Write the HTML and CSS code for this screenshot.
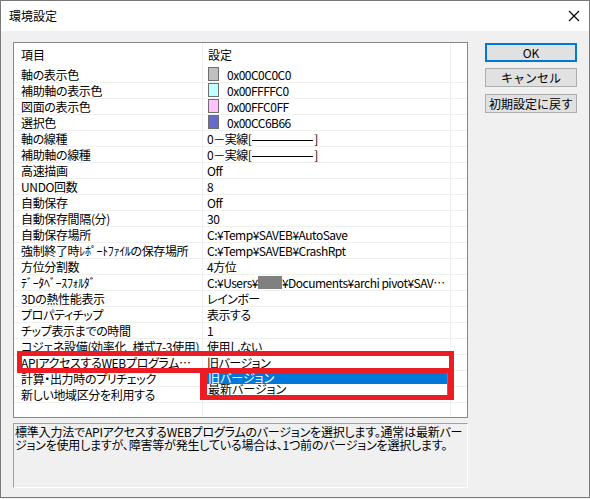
FILE: index.html
```html
<!DOCTYPE html>
<html lang="ja">
<head>
<meta charset="utf-8">
<title>環境設定</title>
<link rel="stylesheet" href="styles.css">
</head>
<body>
<div class="window">
  <div class="titlebar">
    <span class="title">環境設定</span>
    <svg class="close" width="12" height="12" viewBox="0 0 12 12"><path d="M1 1 L11 11 M11 1 L1 11" stroke="#000" stroke-width="1.1" fill="none"/></svg>
  </div>
  <div class="content">
    <div class="left">
      <div class="list">
        <div class="row head"><div class="c1">項目</div><div class="c2">設定</div><div class="c3"></div></div>
        <div class="row"><div class="c1">軸の表示色</div><div class="c2"><span class="sw sw-gray"></span>0x00C0C0C0</div><div class="c3"></div></div>
        <div class="row"><div class="c1">補助軸の表示色</div><div class="c2"><span class="sw sw-cyan"></span>0x00FFFFC0</div><div class="c3"></div></div>
        <div class="row"><div class="c1">図面の表示色</div><div class="c2"><span class="sw sw-pink"></span>0x00FFC0FF</div><div class="c3"></div></div>
        <div class="row"><div class="c1">選択色</div><div class="c2"><span class="sw sw-blue"></span>0x00CC6B66</div><div class="c3"></div></div>
        <div class="row"><div class="c1">軸の線種</div><div class="c2">0－実線[<span class="dash"></span>]</div><div class="c3"></div></div>
        <div class="row"><div class="c1">補助軸の線種</div><div class="c2">0－実線[<span class="dash"></span>]</div><div class="c3"></div></div>
        <div class="row"><div class="c1">高速描画</div><div class="c2">Off</div><div class="c3"></div></div>
        <div class="row"><div class="c1">UNDO回数</div><div class="c2">8</div><div class="c3"></div></div>
        <div class="row"><div class="c1">自動保存</div><div class="c2">Off</div><div class="c3"></div></div>
        <div class="row"><div class="c1">自動保存間隔(分)</div><div class="c2">30</div><div class="c3"></div></div>
        <div class="row"><div class="c1">自動保存場所</div><div class="c2">C:¥Temp¥SAVEB¥AutoSave</div><div class="c3"></div></div>
        <div class="row"><div class="c1">強制終了時ﾚﾎﾟｰﾄﾌｧｲﾙの保存場所</div><div class="c2">C:¥Temp¥SAVEB¥CrashRpt</div><div class="c3"></div></div>
        <div class="row"><div class="c1">方位分割数</div><div class="c2">4方位</div><div class="c3"></div></div>
        <div class="row"><div class="c1">ﾃﾞｰﾀﾍﾞｰｽﾌｫﾙﾀﾞ</div><div class="c2">C:¥Users¥<span class="mask"></span>¥Documents¥archi pivot¥SAVEB¥Data</div><div class="c3"></div></div>
        <div class="row"><div class="c1">3Dの熱性能表示</div><div class="c2">レインボー</div><div class="c3"></div></div>
        <div class="row"><div class="c1">プロパティチップ</div><div class="c2">表示する</div><div class="c3"></div></div>
        <div class="row"><div class="c1">チップ表示までの時間</div><div class="c2">1</div><div class="c3"></div></div>
        <div class="row"><div class="c1">コジェネ設備(効率化_様式7-3使用)</div><div class="c2">使用しない</div><div class="c3"></div></div>
        <div class="row"><div class="c1">APIアクセスするWEBプログラムのバージョン</div><div class="c2">旧バージョン</div><div class="c3"></div></div>
        <div class="row"><div class="c1">計算・出力時のプリチェック</div><div class="c2"></div><div class="c3"></div></div>
        <div class="row"><div class="c1">新しい地域区分を利用する</div><div class="c2"></div><div class="c3"></div></div>
        <div class="row filler"><div class="c1"></div><div class="c2"></div><div class="c3"></div></div>

        <div class="dropdown">
          <div class="opt sel">旧バージョン</div>
          <div class="opt">最新バージョン</div>
        </div>
        <div class="mark mark1"></div>
        <div class="mark mark2"></div>
      </div>
      <div class="desc">標準入力法でAPIアクセスするWEBプログラムのバージョンを選択します。通常は最新バージョンを使用しますが、障害等が発生している場合は、1つ前のバージョンを選択します。</div>
    </div>
    <div class="buttons">
      <button class="btn btn-default">OK</button>
      <button class="btn">キャンセル</button>
      <button class="btn btn-reset">初期設定に戻す</button>
    </div>
  </div>
</div>
</body>
</html>
```

FILE: styles.css
```css
html, body {
  margin: 0;
  padding: 0;
  background: #f0f0f0;
}
body {
  font-family: "Noto Sans CJK JP", "Noto Sans", sans-serif;
  font-size: 12px;
  color: #000;
  font-feature-settings: "palt";
}
.window {
  width: 590px;
  height: 498px;
  box-sizing: border-box;
  border: 1px solid #7a7a7a;
  display: flex;
  flex-direction: column;
  background: #f0f0f0;
}
.titlebar {
  height: 30px;
  flex: none;
  background: #fff;
  display: flex;
  align-items: center;
  padding-left: 8px;
}
.title {
  font-size: 12px;
  line-height: 14px;
}
.close {
  margin-left: auto;
  margin-right: 9px;
}
.content {
  flex: 1;
  display: flex;
  gap: 17px;
  padding: 11px 0 0 12px;
}
.left {
  width: 455px;
  display: flex;
  flex-direction: column;
  gap: 5px;
}
.list {
  position: relative;
  height: 376px;
  box-sizing: border-box;
  border: 1px solid #828790;
  background: #fff;
  display: flex;
  flex-direction: column;
  overflow: hidden;
}
.row {
  display: grid;
  grid-template-columns: 189px 248px 16px;
  height: 16px;
  flex: none;
}
.row > div {
  box-sizing: border-box;
  border-right: 1px solid #f0f0f0;
  border-bottom: 1px solid #f0f0f0;
  line-height: 15px;
  white-space: nowrap;
  overflow: hidden;
  text-overflow: ellipsis;
}
.row.head {
  height: 24px;
}
.row.head > div {
  border-bottom: none;
  line-height: 24px;
}
.row.filler {
  flex: 1;
  height: auto;
}
.row.filler > div {
  border-bottom: none;
}
.c1 {
  padding-left: 7px;
  letter-spacing: -0.35px;
}
.c2 {
  padding-left: 4px;
  letter-spacing: -0.5px;
}
.row.head .c1,
.row.head .c2 {
  letter-spacing: 0;
}
.row.head .c2 {
  padding-left: 5px;
}
.c3 {
  border-right: none !important;
}
.sw {
  display: inline-block;
  vertical-align: top;
  width: 11px;
  height: 14px;
  box-sizing: border-box;
  border: 1px solid #6e6e6e;
  margin: 0 8px 0 1px;
}
.sw-gray { background: #c0c0c0; }
.sw-cyan { background: #c0ffff; }
.sw-pink { background: #ffc0ff; }
.sw-blue { background: #666bcc; }
.dash {
  display: inline-block;
  vertical-align: middle;
  width: 61px;
  height: 0;
  border-top: 1px solid #000;
  margin: 0 1px;
}
.mask {
  display: inline-block;
  vertical-align: top;
  margin-top: 1px;
  width: 24px;
  height: 13px;
  background: #808080;
}
.dropdown {
  position: absolute;
  left: 193px;
  top: 330px;
  width: 241px;
  height: 22px;
  box-sizing: border-box;
  background: #fff;
  border-right: 1px solid #7a7a7a;
  overflow: hidden;
}
.opt {
  height: 11px;
  line-height: 10px;
  padding-left: 1px;
  overflow: hidden;
  white-space: nowrap;
}
.opt.sel {
  background: #0078d7;
  color: #fff;
}
.mark {
  position: absolute;
  border: 5px solid #ed1c24;
  box-sizing: border-box;
}
.mark1 {
  left: 3px;
  top: 308px;
  width: 437px;
  height: 22px;
}
.mark2 {
  left: 186px;
  top: 325px;
  width: 254px;
  height: 32px;
  border-width: 5px 6px 5px 7px;
}
.desc {
  height: 65px;
  box-sizing: border-box;
  border-top: 1px solid #a0a0a0;
  border-left: 1px solid #a0a0a0;
  border-right: 1px solid #fff;
  border-bottom: 1px solid #fff;
  padding: 1px 0 0 1px;
  line-height: 13px;
  word-break: break-all;
  letter-spacing: -0.2px;
}
.buttons {
  width: 92px;
  display: flex;
  flex-direction: column;
  gap: 6px;
  padding-top: 1px;
}
.btn {
  height: 19px;
  box-sizing: border-box;
  border: 1px solid #adadad;
  background: #e1e1e1;
  font-family: inherit;
  font-size: 12px;
  line-height: 15px;
  padding: 0;
  color: #000;
}
.btn-default {
  border: 2px solid #0078d7;
}
.btn-reset {
  margin-top: 1px;
}
```
